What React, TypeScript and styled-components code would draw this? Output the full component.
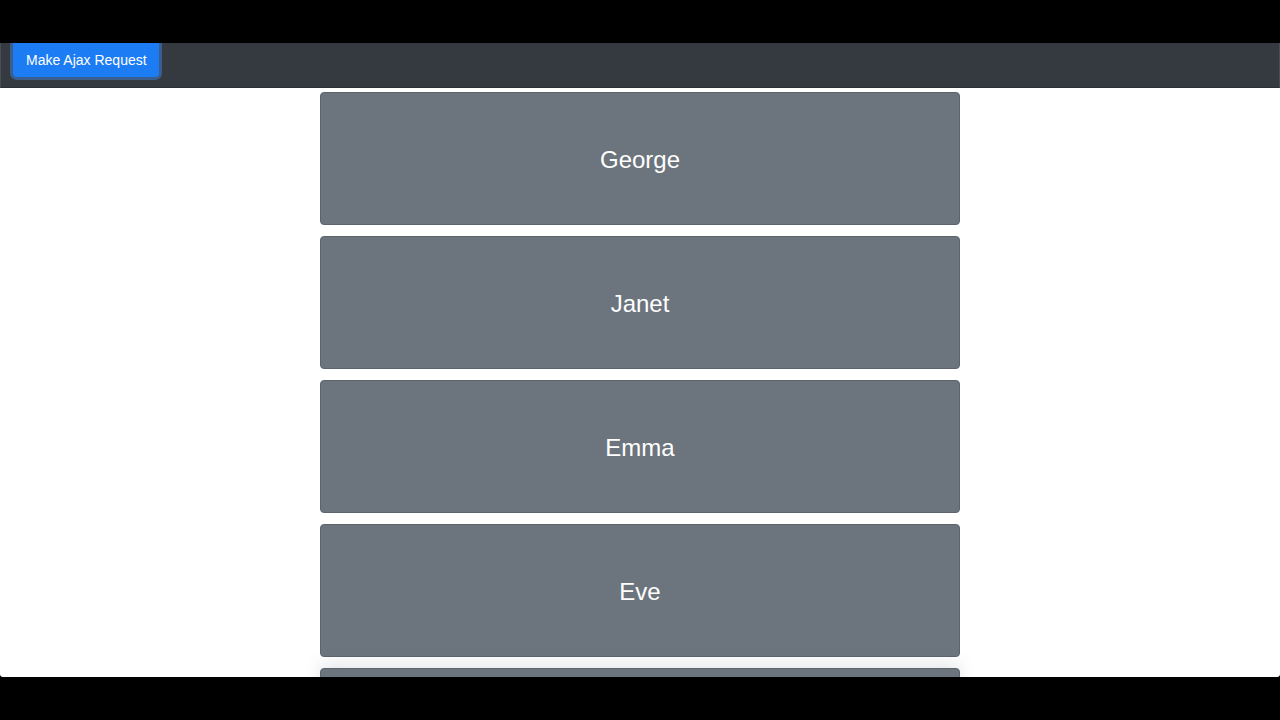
import styled, {createGlobalStyle} from "styled-components";

const GlobalStyle = createGlobalStyle`
  html, body {
    margin: 0;
    padding: 0;
    background: #000;
  }
  body {
    font-family: "Liberation Sans", Arial, sans-serif;
  }
`;

// the last card sits below the fold, only its top edge shows
const names = ['George', 'Janet', 'Emma', 'Eve', ''];

const Screen = styled.div`
  width: 1280px;
  height: 720px;
  padding: 43px 0;
  box-sizing: border-box;
  background: #000;
`;

const Page = styled.div`
  height: 634px;
  background: #fff;
  overflow: hidden;
  border-radius: 0 0 3px 3px;
  display: flex;
  flex-direction: column;
`;

const Navbar = styled.nav`
  flex: 0 0 auto;
  height: 45px;
  box-sizing: border-box;
  background: #343a40;
  border-left: 1px solid #484e55;
  border-right: 1px solid #484e55;
  border-bottom: 1px solid #2b3035;
  display: flex;
  align-items: flex-end;
  padding: 0 12px 10px;
`;

const AjaxButton = styled.button`
  height: 38px;
  padding: 4px 12px 0 13px;
  border: none;
  border-radius: 4px;
  background: #1b7cf4;
  color: #fff;
  font-family: inherit;
  font-size: 14px;
  box-shadow: 0 0 0 3px #3a5f8e;
  cursor: pointer;
`;

const List = styled.main`
  display: flex;
  flex-direction: column;
  align-items: center;
  gap: 11px;
  padding-top: 4px;
`;

const Card = styled.div<{$raised?: boolean}>`
  flex: 0 0 auto;
  width: 640px;
  height: 133px;
  box-sizing: border-box;
  background: #6c757d;
  border: 1px solid #5d646b;
  border-radius: 4px;
  display: flex;
  align-items: center;
  justify-content: center;
  color: #fff;
  font-size: 24px;
  padding-top: 3px;
  box-shadow: ${({$raised}) => $raised ? '0 -4px 16px rgba(108, 117, 125, 0.18)' : 'none'};
`;

export default function App() {
  return (
    <Screen>
      <GlobalStyle/>
      <Page>
        <Navbar>
          <AjaxButton>Make Ajax Request</AjaxButton>
        </Navbar>
        <List>
          {names.map((name, i) => (
            <Card key={i} $raised={i === names.length - 1}>{name}</Card>
          ))}
        </List>
      </Page>
    </Screen>
  );
}
